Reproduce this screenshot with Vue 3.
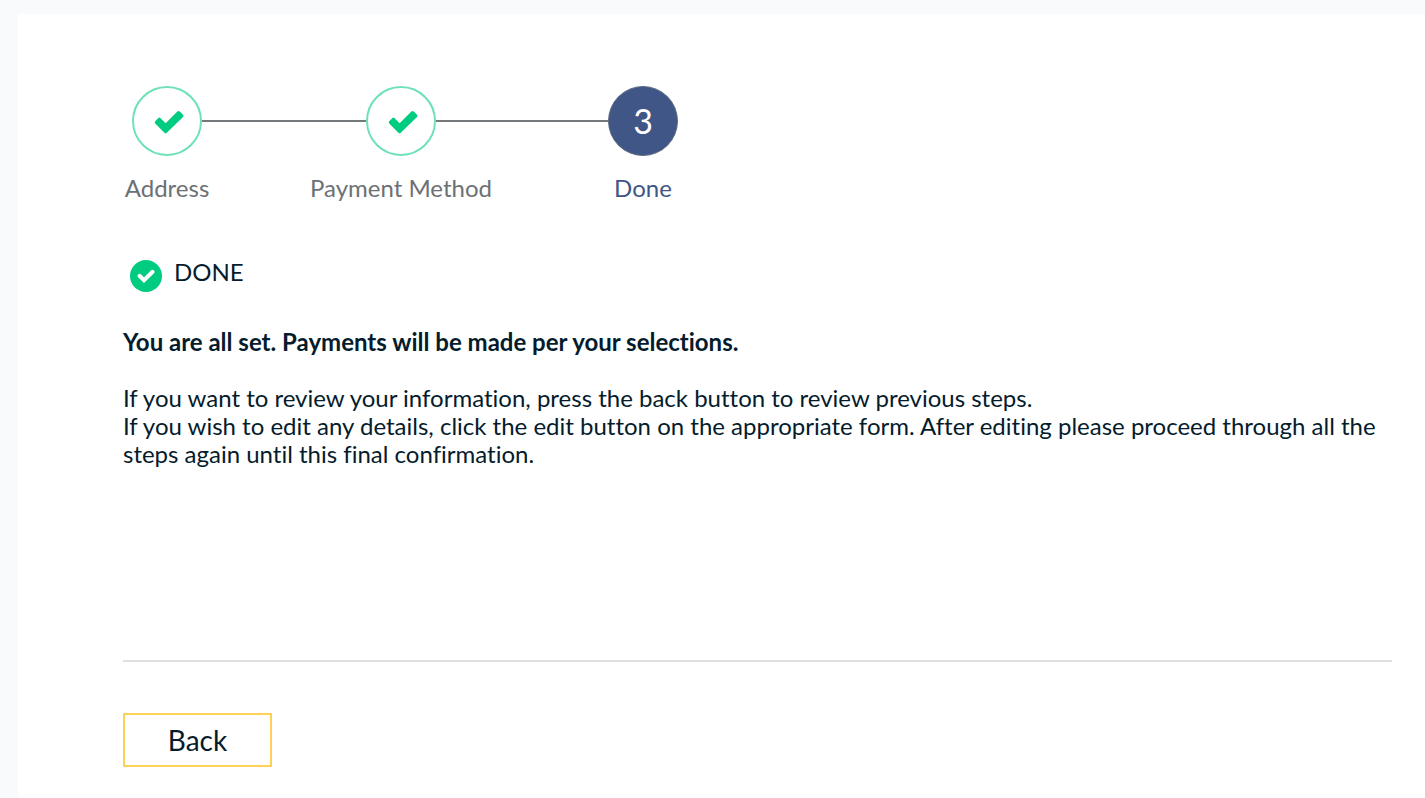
<script setup>
const steps = [
  { number: 1, label: 'Address', state: 'complete' },
  { number: 2, label: 'Payment Method', state: 'complete' },
  { number: 3, label: 'Done', state: 'current' }
]
</script>

<template>
  <main class="panel">
    <ol class="stepper">
      <li
        v-for="step in steps"
        :key="step.number"
        class="step"
        :class="step.state"
        :aria-current="step.state === 'current' ? 'step' : null"
      >
        <span class="circle">
          <svg v-if="step.state === 'complete'" class="tick" viewBox="0 0 30 24" aria-hidden="true">
            <path d="M1.2 11.2 4.4 8Q5.4 7 6.4 8L11.6 13.2 23.4 1.4Q24.6.4 25.8 1.4L29 4.7Q30 5.8 29 6.9L12.8 22.8Q11.6 23.8 10.4 22.8L1.2 13.4Q.2 12.3 1.2 11.2Z" />
          </svg>
          <template v-else>{{ step.number }}</template>
        </span>
        <span class="label">{{ step.label }}</span>
      </li>
    </ol>

    <h1 class="status">
      <svg class="badge" viewBox="0 0 32 32" aria-hidden="true">
        <circle cx="16" cy="16" r="16" />
        <path d="M9.5 15.8 14 20.2 22.6 11.8" />
      </svg>
      <span>DONE</span>
    </h1>

    <p class="lead">You are all set. Payments will be made per your selections.</p>
    <p class="details">
      If you want to review your information, press the back button to review previous steps.<br />
      If you wish to edit any details, click the edit button on the appropriate form. After editing please proceed through all the steps again until this final confirmation.
    </p>

    <footer class="actions">
      <button type="button" class="back">Back</button>
    </footer>
  </main>
</template>

<style>
body {
  background: #f8fafc;
}
</style>

<style scoped>
.panel {
  box-sizing: border-box;
  min-height: calc(100vh - 14px);
  margin: 14px 0 0 18px;
  padding: 72px 33px 30px 105px;
  background: #fff;
  color: #051c2c;
  font-family: Lato, "Open Sans", sans-serif;
  font-size: 24px;
  line-height: 28px;
  font-variant-ligatures: none;
}

.stepper {
  display: flex;
  margin: 0;
  padding: 0 0 0 9px;
  list-style: none;
}

.step {
  --link: 164px;
  position: relative;
  display: flex;
  flex-direction: column;
  align-items: center;
  gap: 18px;
  width: 70px;
  color: #6c7175;
}

.step.current {
  --link: 172px;
}

.step + .step {
  margin-left: var(--link);
}

.step + .step::before {
  content: "";
  position: absolute;
  top: 34px;
  right: 100%;
  width: var(--link);
  height: 2px;
  background: #75787b;
}

.circle {
  display: flex;
  align-items: center;
  justify-content: center;
  box-sizing: border-box;
  width: 70px;
  height: 70px;
  border: 2px solid #6ee2b6;
  border-radius: 50%;
  font-size: 34px;
}

.tick {
  width: 30px;
  height: 24px;
  margin: 2px 0 0 3px;
  fill: #00cc80;
}

.label {
  white-space: nowrap;
}

.step.current {
  color: #3f5686;
}

.current .circle {
  border: 1px solid #5d6a80;
  background: #3f5686;
  color: #fff;
}

.status {
  display: flex;
  align-items: flex-start;
  gap: 12px;
  margin: 56px 0 0 7px;
  font-size: 24px;
  font-weight: 400;
}

.badge {
  width: 32px;
  height: 32px;
  margin-top: 2px;
}

.badge circle {
  fill: #00cc80;
}

.badge path {
  fill: none;
  stroke: #fff;
  stroke-width: 4;
  stroke-linecap: round;
  stroke-linejoin: miter;
}

.lead {
  margin: 36px 0 28px;
  font-weight: 700;
}

.details {
  margin: 0;
}

.actions {
  margin-top: 192px;
  padding-top: 51px;
  border-top: 2px solid #dedfe0;
}

.back {
  width: 149px;
  height: 54px;
  padding: 0;
  border: 2px solid #ffd057;
  background: #fff;
  color: inherit;
  font: inherit;
  font-size: 28px;
}
</style>
